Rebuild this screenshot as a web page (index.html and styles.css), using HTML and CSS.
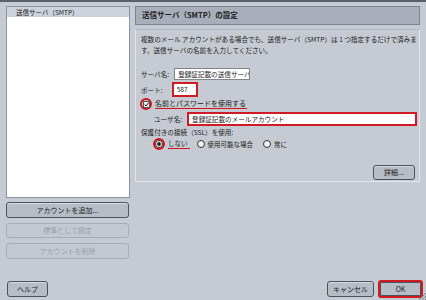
FILE: index.html
```html
<!DOCTYPE html>
<html lang="ja">
<head>
    <meta charset="UTF-8">
    <meta name="viewport" content="width=device-width, initial-scale=1.0">
    <title>送信サーバ（SMTP）の設定</title>
    <link rel="stylesheet" href="styles.css">
</head>
<body>
    <div class="window">
        <div class="sidebar">
            <div class="account-list">
                <div class="account-item selected">送信サーバ（SMTP）</div>
            </div>
            <button class="btn side-btn">アカウントを追加...</button>
            <button class="btn side-btn" disabled>標準として設定</button>
            <button class="btn side-btn" disabled>アカウントを削除</button>
        </div>

        <div class="panel">
            <div class="panel-title">送信サーバ（SMTP）の設定</div>
            <div class="panel-body">
                <p class="desc">複数のメール アカウントがある場合でも、送信サーバ（SMTP）は 1 つ指定するだけで済みま<br>す。送信サーバの名前を入力してください。</p>

                <div class="field-row server-row">
                    <span class="label">サーバ名:</span>
                    <span class="input server-input">登録証記載の送信サーバ</span>
                </div>
                <div class="field-row port-row">
                    <span class="label">ポート:</span>
                    <span class="input port-input marked">587</span>
                </div>
                <div class="check-row">
                    <span class="ring">
                        <span class="checkbox">
                            <svg width="5" height="5" viewBox="0 0 5 5"><path d="M0.6 2.6 L2 4 L4.6 0.6" fill="none" stroke="#111" stroke-width="1"/></svg>
                        </span>
                    </span>
                    <span class="underlined check-label">名前とパスワードを使用する</span>
                </div>
                <div class="field-row user-row">
                    <span class="label">ユーザ名:</span>
                    <span class="input user-input marked">登録証記載のメールアカウント</span>
                </div>
                <div class="ssl-label">保護付きの接続（SSL）を使用:</div>
                <div class="radio-row">
                    <label class="radio-opt">
                        <span class="ring"><span class="radio checked"></span></span>
                        <span class="underlined">しない</span>
                    </label>
                    <label class="radio-opt">
                        <span class="radio"></span>
                        <span>使用可能な場合</span>
                    </label>
                    <label class="radio-opt">
                        <span class="radio"></span>
                        <span>常に</span>
                    </label>
                </div>
                <div class="detail-row">
                    <button class="btn detail-btn">詳細...</button>
                </div>
            </div>
        </div>

        <div class="footer">
            <button class="btn help-btn">ヘルプ</button>
            <div class="footer-right">
                <button class="btn cancel-btn">キャンセル</button>
                <button class="btn ok-btn">OK</button>
            </div>
        </div>
    </div>

    <svg class="grip" width="8" height="8" viewBox="0 0 8 8">
        <path d="M8 1 L1 8 M8 4 L4 8 M8 7 L7 8" stroke="#7c828b" stroke-width="1"/>
    </svg>
</body>
</html>
```

FILE: styles.css
```css
body {
    margin: 0;
    width: 426px;
    height: 300px;
    overflow: hidden;
    background-color: #c6cad2;
    font-family: "Noto Sans CJK JP", "Liberation Sans", sans-serif;
    font-size: 7px;
    color: #222;
    position: relative;
}
.window {
    box-sizing: border-box;
    height: 300px;
    border-top: 2px solid #5b5f67;
    padding: 4px 5px 0 6px;
    display: grid;
    grid-template-columns: 124px 285px;
    grid-template-rows: 258px auto;
    column-gap: 5px;
}

/* 左側 */
.sidebar {
    display: flex;
    flex-direction: column;
}
.account-list {
    height: 196px;
    background-color: #fff;
    border: 1px solid #8d939c;
    margin-bottom: 4px;
}
.account-item {
    height: 10px;
    line-height: 10px;
    padding-left: 9px;
    font-size: 6.5px;
}
.account-item.selected {
    background-color: #cdd3dc;
}
.btn {
    font-family: inherit;
    font-size: 7px;
    color: #222;
    background-color: #b7bdc7;
    border: 1px solid #4d525a;
    border-radius: 3px;
    box-shadow: inset 0 1px 0 #d8dce2;
    padding: 0;
    height: 16px;
    line-height: 13px;
}
.btn:disabled {
    color: #9aa1aa;
    background-color: #c4c9d1;
    border-color: #a7adb6;
    box-shadow: none;
}
.side-btn {
    width: 123px;
    margin-bottom: 5px;
}

/* 右側 */
.panel {
    display: flex;
    flex-direction: column;
}
.panel-title {
    height: 17px;
    line-height: 16px;
    background-color: #a8afba;
    border: 1px solid #7c838d;
    padding-left: 6px;
    font-weight: bold;
    font-size: 7.5px;
    margin-bottom: 4px;
}
.panel-body {
    border: 1px solid #e2e5ea;
    border-top-color: #b0b5bd;
    padding: 4px 5px 4px 5px;
    height: 143px;
}
.desc {
    margin: 0 0 12px;
    font-size: 6.6px;
    line-height: 11px;
    white-space: nowrap;
}
.field-row {
    display: flex;
    align-items: center;
}
.label {
    font-size: 6.6px;
    white-space: nowrap;
    flex-shrink: 0;
}
.input {
    display: inline-block;
    box-sizing: border-box;
    background-color: #fff;
    border: 1px solid #7f858e;
    font-size: 6.6px;
    padding-left: 3px;
    white-space: nowrap;
    overflow: hidden;
    flex-shrink: 0;
}
.input.marked {
    border: 2px solid #cf1c24;
}
.server-row {
    gap: 5px;
}
.server-input {
    width: 76px;
    height: 12px;
    line-height: 10px;
}
.port-row {
    margin-top: 2px;
    gap: 9px;
}
.port-input {
    width: 26px;
    height: 15px;
    line-height: 11px;
}
.check-row {
    display: flex;
    align-items: center;
    margin-top: 1px;
    margin-left: -1px;
}
.ring {
    display: inline-flex;
    align-items: center;
    justify-content: center;
    box-sizing: border-box;
    width: 12px;
    height: 12px;
    border: 2px solid #d4141d;
    border-radius: 50%;
    flex-shrink: 0;
}
.checkbox {
    display: flex;
    align-items: center;
    justify-content: center;
    box-sizing: border-box;
    width: 7px;
    height: 7px;
    border: 1px solid #555;
    background-color: #eee;
}
.underlined {
    border-bottom: 1px solid #d4141d;
    padding-right: 2px;
    line-height: 9px;
    white-space: nowrap;
}
.check-label {
    margin-left: 3px;
    padding-right: 1px;
}
.user-row {
    margin-top: 2px;
    margin-left: 13px;
    gap: 5px;
}
.user-input {
    width: 230px;
    height: 14px;
    line-height: 10px;
}
.ssl-label {
    margin-top: 1px;
    font-size: 6.6px;
    line-height: 10px;
}
.radio-row {
    display: flex;
    align-items: center;
    margin-top: 1px;
    margin-left: 12px;
}
.radio-opt {
    display: flex;
    align-items: center;
    gap: 3px;
    font-size: 6.5px;
    margin-right: 7px;
    white-space: nowrap;
}
.radio-opt:nth-child(2) {
    margin-right: 10px;
}
.radio {
    box-sizing: border-box;
    width: 8px;
    height: 8px;
    border: 1px solid #333;
    border-radius: 50%;
    background-color: #f2f2f2;
}
.radio.checked {
    background: radial-gradient(circle, #222 0 1.5px, #f2f2f2 2px);
}
.detail-row {
    display: flex;
    justify-content: flex-end;
    margin-top: 15px;
    margin-right: -1px;
}
.detail-btn {
    width: 42px;
    height: 15px;
}

/* 下部ボタン */
.footer {
    grid-column: 1 / 3;
    display: flex;
    justify-content: space-between;
    align-items: center;
    padding-top: 14px;
    margin-right: -3px;
}
.help-btn {
    width: 41px;
    margin-left: 1px;
}
.footer-right {
    display: flex;
    align-items: center;
    gap: 4px;
}
.cancel-btn {
    width: 47px;
}
.ok-btn {
    width: 45px;
    height: 18px;
    border: 2px solid #cf1c24;
    box-shadow: inset 0 0 0 1px #4d525a;
}
.grip {
    position: absolute;
    right: 0;
    bottom: 0;
}
```
